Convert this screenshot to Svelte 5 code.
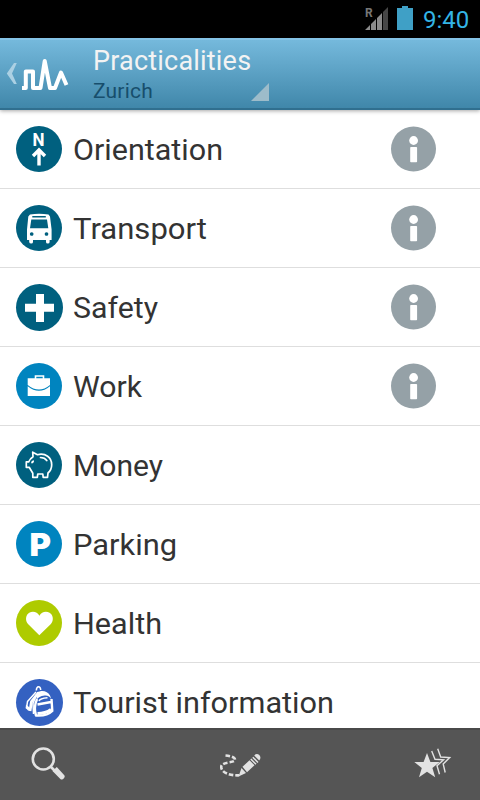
<script>
  const items = [
    { id: 'orientation', label: 'Orientation', color: '#00607f', width: 149, info: true },
    { id: 'transport', label: 'Transport', color: '#00607f', width: 133, info: true },
    { id: 'safety', label: 'Safety', color: '#00607f', width: 84, info: true, large: true },
    { id: 'work', label: 'Work', color: '#0084bf', width: 68, info: true },
    { id: 'money', label: 'Money', color: '#00607f', width: 89 },
    { id: 'parking', label: 'Parking', color: '#0084bf', width: 103 },
    { id: 'health', label: 'Health', color: '#aecb00', width: 88 },
    { id: 'tourist', label: 'Tourist information', color: '#3461c1', width: 260, large: true },
  ];
</script>

<div class="screen">
  <div class="status-bar">
    <svg class="signal" width="24" height="26" viewBox="0 0 24 26">
      <text x="0" y="11" font-size="12" font-weight="700" fill="#777">R</text>
      <path d="M0 24 5 19V24zM6 24V18L11 13V24zM12 24V12L17 7V24z" fill="#8b8b8b" />
      <path d="M18 24V6L23 1V24z" fill="#464646" />
    </svg>
    <svg class="battery" width="16" height="24" viewBox="0 0 16 24">
      <path d="M5 0h6v2h5v22H0V2h5z" fill="#3fa0c6" />
    </svg>
    <span class="clock">9:40</span>
  </div>

  <header class="action-bar">
    <svg class="home" width="72" height="66" viewBox="0 0 72 66">
      <path d="M14 25h2.800L12 35.500l4.800 10.500H14L6.800 35.500z" fill="#abd0e3" />
      <path
        d="M22 50h3.800V33.500h7.200V50h7.500L44.700 23l5.300 27h5L61 34.500l5.500 12.500"
        fill="none"
        stroke="#fff"
        stroke-width="4"
        stroke-linejoin="round"
      />
    </svg>
    <div class="titles">
      <h1>Practicalities</h1>
      <h2>Zurich</h2>
    </div>
    <span class="spinner"></span>
  </header>

  <ul class="list">
    {#each items as item (item.id)}
      <li class="row">
        <svg class="category" width="48" height="48" viewBox="0 0 48 48">
          {#if item.large}
            <circle cx="24.5" cy="24.5" r="23.5" fill={item.color} />
          {:else}
            <circle cx="24" cy="24" r="23" fill={item.color} />
          {/if}

          {#if item.id === 'orientation'}
            <text x="17.500" y="20.500" font-size="17.500" font-weight="700" fill="#fff" textLength="12" lengthAdjust="spacingAndGlyphs">N</text>
            <path d="M24 40.500V25.500M18 31l6-6 6 6" fill="none" stroke="#fff" stroke-width="3.400" />
          {:else if item.id === 'transport'}
            <path
              fill="#fff"
              fill-rule="evenodd"
              d="M15 10.500q9-1.600 18.500 0l1.500 2 1.600 13V36h-2v2q0 1.500-1.800 1.500T31 38v-2H18v2q0 1.500-1.800 1.500T14.200 38v-2H12V25.500l1.300-13zM17.300 12v1.600h13.500V12zM16.300 15.500L15 24.300h18.300L32 15.500zM16.700 28.200a1.800 1.800 0 1 0 .01 0zM31.500 28.200a1.800 1.800 0 1 0 .01 0z"
            />
          {:else if item.id === 'safety'}
            <path d="M21 11h8v9.700h10v8H29V39h-8V28.700H10v-8h11z" fill="#fff" />
          {:else if item.id === 'work'}
            <path d="M20.500 17v-3h8v3" fill="none" stroke="#fff" stroke-width="1.600" />
            <path d="M12.700 16.300H35V23q-11 9-22.300 0z" fill="#fff" />
            <path d="M12.700 24.300q11.300 9 22.300 0V34H12.700z" fill="#fff" />
          {:else if item.id === 'money'}
            <g fill="none" stroke="#fff" stroke-width="1.700" stroke-linejoin="round">
              <path
                d="M17.700 11.200l4.800 2.500c8-2 14.200 2.800 14.200 10 0 3.500-1.400 6.300-3.700 8.300l-.5 4.300h-4.300l-.4-3.300h-5l-.5 3.300h-4.500v-4L14.200 26.300H11.300V20.800h2.500c.8-2 2.200-3.700 4.200-5z"
              />
              <path d="M25.500 16.500c2.800 0 5 1 6.300 3" stroke-linecap="round" />
              <path d="M17 22.300q0-1.800 1.800-2.300" stroke-width="2" />
            </g>
          {:else if item.id === 'parking'}
            <text class="parking-sign" x="14.500" y="36" font-size="31" fill="#fff" textLength="21.500" lengthAdjust="spacingAndGlyphs">P</text>
          {:else if item.id === 'health'}
            <path
              d="M24.300 36.300L13 25C9.800 21 10.800 15.800 14.200 13.700c3.800-2.200 8.300-.8 10.200 3 2-3.800 6.500-5.200 10.200-3 3.500 2.100 4.500 7.300 1.300 11.300z"
              fill="#fff"
            />
          {:else if item.id === 'tourist'}
            <g fill="none" stroke="#fff" stroke-width="1.500" stroke-linejoin="round">
              <path d="M21.300 12.500c.3-5 4.200-5 4.400-.5" />
              <path d="M21 14L12.500 23.500l-1 7" />
              <path d="M23.500 14.500l-7 9-1.500 9.500" stroke-width="2.800" />
              <path d="M21.500 16.500l-3.500 9 .5 10.500" />
              <path
                d="M22.500 26.500l13.500-2.500M36.500 21l.8 12c-3 3-9.500 5-16.300 4.500-1.500-4.500-1.300-11 1-16.500"
                stroke-width="2.400"
              />
              <path d="M24 23q1-2.800 8.500-3.300" />
              <path d="M22.500 35.500q8 0 13.500-4" stroke-width="3" />
            </g>
            <path d="M22 14.500c5-3 10.500-1.500 13 3l1.500 4c-1.500-3-4-4.500-7-4-4 .5-6.500 2-8 4.500z" fill="#fff" />
            <path d="M11 26.500l3.500 3-1 3.500-2.800-3z" fill="#fff" />
          {/if}
        </svg>

        <svg class="label" width={item.width} height="42">
          <text x="-1" y="32" textLength={item.width + 1} lengthAdjust="spacingAndGlyphs">{item.label}</text>
        </svg>

        {#if item.info}
          <svg class="info" width="46" height="46" viewBox="0 0 46 46">
            <circle cx="22.500" cy="23" r="22.500" fill="#95a1a7" />
            <circle cx="22.600" cy="14.500" r="4.400" fill="#fff" />
            <rect x="19.200" y="21" width="6.900" height="15.300" rx=".8" fill="#fff" />
          </svg>
        {/if}
      </li>
    {/each}
  </ul>

  <nav class="toolbar">
    <svg width="36" height="36" viewBox="0 0 36 36">
      <circle cx="13.300" cy="13" r="10.500" fill="none" stroke="#e2e2e2" stroke-width="2.600" />
      <path d="M20.500 20.500l4 4" stroke="#e2e2e2" stroke-width="2.600" />
      <path d="M22.500 25l4.300-4 7.700 8.500q.7 1-.4 2.500-1.600 2.200-3.500 1.300z" fill="#e2e2e2" />
    </svg>
    <svg class="draw" width="44" height="36" viewBox="0 0 44 36">
      <path
        d="M5.500 9.500c6 .5 9.500 2 9.500 4.300 0 3.500-13.500 1.500-13.800 7 0 6 9 9 18 8.500"
        fill="none"
        stroke="#e2e2e2"
        stroke-width="2.600"
        stroke-dasharray="4.500 2"
      />
      <path d="M18.500 30.500l3-8.500 4.500 5zM22.500 20.800l7-6.500 5 5-7.500 7z" fill="#e2e2e2" />
      <path d="M30.800 13l5.200 5.300M32.800 11.200l5.200 5.300" stroke="#e2e2e2" stroke-width="1.500" />
      <path d="M34.200 9.500q2.300-2.500 4.800-.8c1.700 1.500 2 3.500.2 5.800z" fill="#e2e2e2" />
    </svg>
    <svg class="star" width="40" height="36" viewBox="0 0 40 36">
      <path
        d="M13 5l3.400 9h9.300l-7.300 6 2.800 9.300L13 23.800l-8 5.500 2.800-9.300L.3 14h9.300z"
        fill="#e2e2e2"
      />
      <path
        d="M17.700 3l3.300 8.300 8.500.5-6.500 6 2.500 8.500M23.700.7l3 8.300 9 .5-6.500 6.500 2 8.500"
        fill="none"
        stroke="#e2e2e2"
        stroke-width="1.400"
      />
    </svg>
  </nav>
</div>

<style>
  :global(body) {
    margin: 0;
  }

  .screen {
    display: flex;
    flex-direction: column;
    width: 480px;
    height: 800px;
    overflow: hidden;
    background: #fff;
    font-family: Roboto, sans-serif;
  }

  svg {
    display: block;
    flex-shrink: 0;
  }

  .status-bar {
    display: flex;
    flex-shrink: 0;
    height: 38px;
    box-sizing: border-box;
    padding: 6px 10px 0 0;
    justify-content: flex-end;
    background: #000;
  }

  .signal {
    margin-right: 8px;
  }

  .battery {
    margin-right: 10px;
  }

  .clock {
    width: 47px;
    color: #33b5e5;
    font-size: 24px;
    line-height: 28px;
    white-space: nowrap;
  }

  .action-bar {
    display: flex;
    flex-shrink: 0;
    height: 72px;
    box-sizing: border-box;
    border-top: 2px solid #84c3e6;
    border-bottom: 2px solid #306f8f;
    background: linear-gradient(#75b9dc, #4087aa);
    box-shadow: 0 1px 4px rgba(0, 0, 0, 0.35);
    z-index: 1;
  }

  .home {
    margin-top: -2px;
  }

  .titles {
    width: 158px;
    margin-left: 21px;
  }

  h1,
  h2 {
    margin: 0;
    font-weight: 400;
    white-space: nowrap;
  }

  h1 {
    padding-top: 5px;
    color: #f3f3f3;
    font-size: 27px;
    line-height: 32px;
    letter-spacing: 0.2px;
  }

  h2 {
    color: #174e6c;
    font-size: 21px;
    line-height: 28px;
    letter-spacing: 0.2px;
  }

  .spinner {
    width: 18px;
    height: 18px;
    margin-top: 43px;
    background: #9dbcca;
    clip-path: polygon(100% 0, 100% 100%, 0 100%);
  }

  .list {
    flex: 1;
    min-height: 0;
    margin: 0;
    padding: 0;
    overflow: hidden;
    list-style: none;
  }

  .row {
    display: flex;
    align-items: flex-start;
    height: 79px;
    box-sizing: border-box;
    padding: 15px 43px 0 15px;
    border-bottom: 1px solid #dedede;
  }

  .label {
    margin: 3px 0 0 11px;
    overflow: visible;
    fill: #333;
    font-size: 30px;
  }

  .info {
    margin: 1px 0 0 auto;
  }

  .parking-sign {
    font-family: Inter, sans-serif;
    font-weight: 900;
  }

  .toolbar {
    display: flex;
    flex-shrink: 0;
    justify-content: space-between;
    height: 72px;
    box-sizing: border-box;
    padding: 16px 26px 0 30px;
    border-top: 2px solid #4a4a4a;
    background: #555;
  }

  .draw {
    margin-left: 4px;
  }

  .star {
    margin-top: 2px;
  }
</style>
